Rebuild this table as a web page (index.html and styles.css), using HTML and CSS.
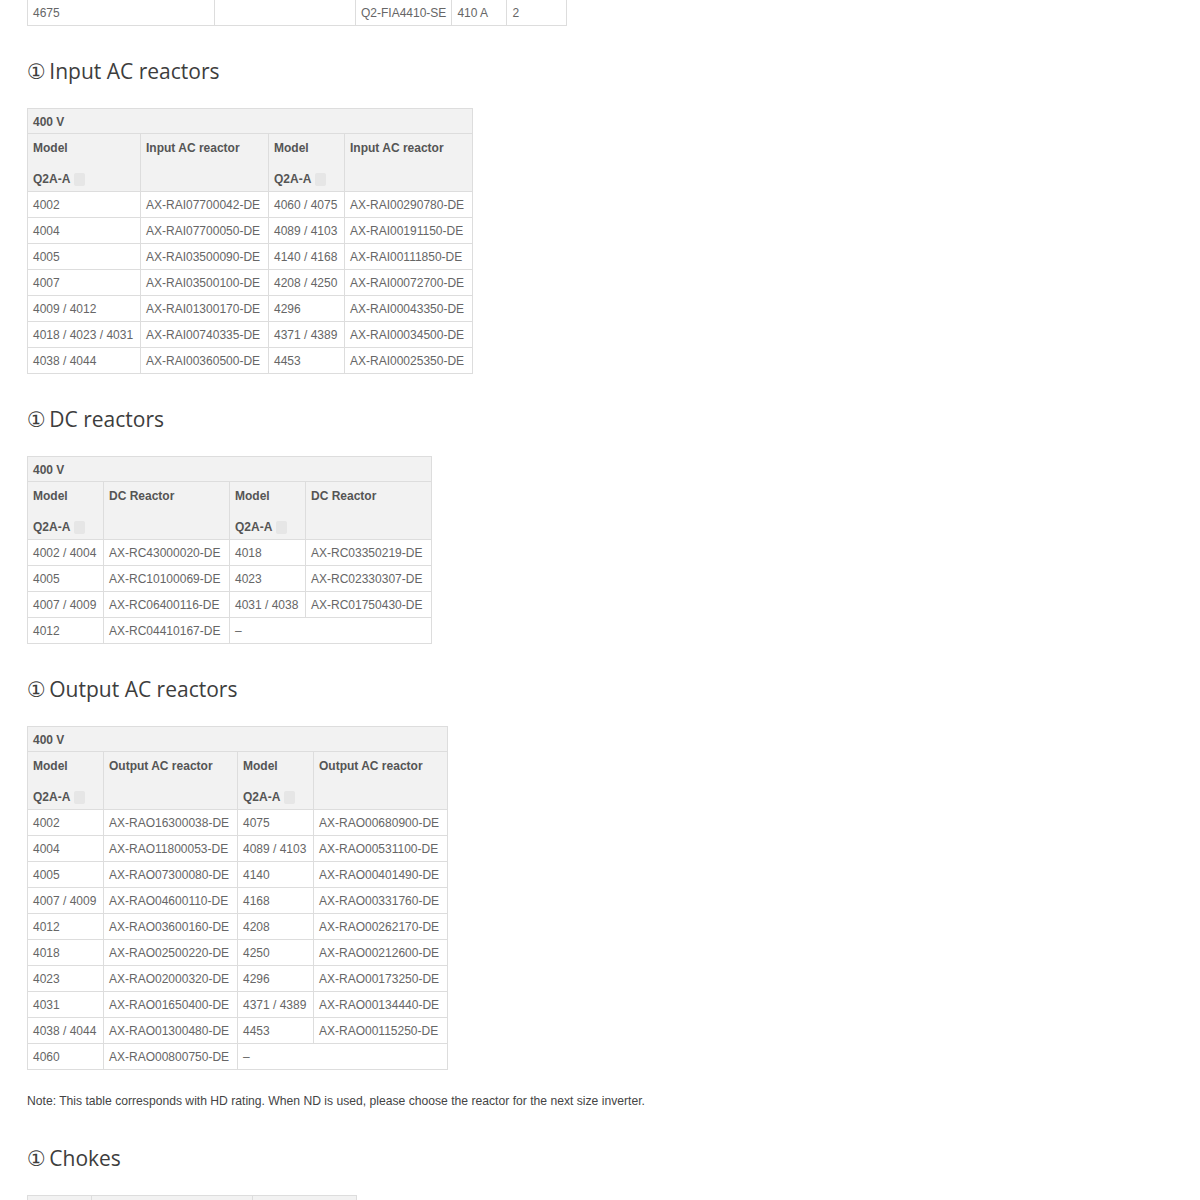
FILE: index.html
```html
<!DOCTYPE html>
<html lang="en">
<head>
<meta charset="utf-8">
<title>Reactors</title>
<link rel="stylesheet" href="styles.css">
</head>
<body>
<div class="page">

  <table class="tbl t-top">
    <colgroup><col class="c187"><col class="c141"><col class="c96"><col class="c55"><col class="c60"></colgroup>
    <tbody>
      <tr class="first"><td>4675</td><td></td><td>Q2-FIA4410-SE</td><td>410 A</td><td>2</td></tr>
    </tbody>
  </table>

  <h2 class="sec"><span class="num">①</span> Input AC reactors</h2>
  <table class="tbl">
    <colgroup><col class="c113"><col class="c128"><col class="c76"><col class="c128"></colgroup>
    <thead>
      <tr><th class="volt" colspan="4">400 V</th></tr>
      <tr>
        <th><div class="hl">Model</div><div class="hl2">Q2A-A <span class="box"></span></div></th>
        <th><div class="hl">Input AC reactor</div></th>
        <th><div class="hl">Model</div><div class="hl2">Q2A-A <span class="box"></span></div></th>
        <th><div class="hl">Input AC reactor</div></th>
      </tr>
    </thead>
    <tbody>
      <tr><td>4002</td><td>AX-RAI07700042-DE</td><td>4060 / 4075</td><td>AX-RAI00290780-DE</td></tr>
      <tr><td>4004</td><td>AX-RAI07700050-DE</td><td>4089 / 4103</td><td>AX-RAI00191150-DE</td></tr>
      <tr><td>4005</td><td>AX-RAI03500090-DE</td><td>4140 / 4168</td><td>AX-RAI00111850-DE</td></tr>
      <tr><td>4007</td><td>AX-RAI03500100-DE</td><td>4208 / 4250</td><td>AX-RAI00072700-DE</td></tr>
      <tr><td>4009 / 4012</td><td>AX-RAI01300170-DE</td><td>4296</td><td>AX-RAI00043350-DE</td></tr>
      <tr><td>4018 / 4023 / 4031</td><td>AX-RAI00740335-DE</td><td>4371 / 4389</td><td>AX-RAI00034500-DE</td></tr>
      <tr><td>4038 / 4044</td><td>AX-RAI00360500-DE</td><td>4453</td><td>AX-RAI00025350-DE</td></tr>
    </tbody>
  </table>

  <h2 class="sec"><span class="num">①</span> DC reactors</h2>
  <table class="tbl">
    <colgroup><col class="c76"><col class="c126"><col class="c76"><col class="c126"></colgroup>
    <thead>
      <tr><th class="volt" colspan="4">400 V</th></tr>
      <tr>
        <th><div class="hl">Model</div><div class="hl2">Q2A-A <span class="box"></span></div></th>
        <th><div class="hl">DC Reactor</div></th>
        <th><div class="hl">Model</div><div class="hl2">Q2A-A <span class="box"></span></div></th>
        <th><div class="hl">DC Reactor</div></th>
      </tr>
    </thead>
    <tbody>
      <tr><td>4002 / 4004</td><td>AX-RC43000020-DE</td><td>4018</td><td>AX-RC03350219-DE</td></tr>
      <tr><td>4005</td><td>AX-RC10100069-DE</td><td>4023</td><td>AX-RC02330307-DE</td></tr>
      <tr><td>4007 / 4009</td><td>AX-RC06400116-DE</td><td>4031 / 4038</td><td>AX-RC01750430-DE</td></tr>
      <tr><td>4012</td><td>AX-RC04410167-DE</td><td colspan="2">–</td></tr>
    </tbody>
  </table>

  <h2 class="sec"><span class="num">①</span> Output AC reactors</h2>
  <table class="tbl">
    <colgroup><col class="c76"><col class="c134"><col class="c76"><col class="c134"></colgroup>
    <thead>
      <tr><th class="volt" colspan="4">400 V</th></tr>
      <tr>
        <th><div class="hl">Model</div><div class="hl2">Q2A-A <span class="box"></span></div></th>
        <th><div class="hl">Output AC reactor</div></th>
        <th><div class="hl">Model</div><div class="hl2">Q2A-A <span class="box"></span></div></th>
        <th><div class="hl">Output AC reactor</div></th>
      </tr>
    </thead>
    <tbody>
      <tr><td>4002</td><td>AX-RAO16300038-DE</td><td>4075</td><td>AX-RAO00680900-DE</td></tr>
      <tr><td>4004</td><td>AX-RAO11800053-DE</td><td>4089 / 4103</td><td>AX-RAO00531100-DE</td></tr>
      <tr><td>4005</td><td>AX-RAO07300080-DE</td><td>4140</td><td>AX-RAO00401490-DE</td></tr>
      <tr><td>4007 / 4009</td><td>AX-RAO04600110-DE</td><td>4168</td><td>AX-RAO00331760-DE</td></tr>
      <tr><td>4012</td><td>AX-RAO03600160-DE</td><td>4208</td><td>AX-RAO00262170-DE</td></tr>
      <tr><td>4018</td><td>AX-RAO02500220-DE</td><td>4250</td><td>AX-RAO00212600-DE</td></tr>
      <tr><td>4023</td><td>AX-RAO02000320-DE</td><td>4296</td><td>AX-RAO00173250-DE</td></tr>
      <tr><td>4031</td><td>AX-RAO01650400-DE</td><td>4371 / 4389</td><td>AX-RAO00134440-DE</td></tr>
      <tr><td>4038 / 4044</td><td>AX-RAO01300480-DE</td><td>4453</td><td>AX-RAO00115250-DE</td></tr>
      <tr><td>4060</td><td>AX-RAO00800750-DE</td><td colspan="2">–</td></tr>
    </tbody>
  </table>

  <p class="note">Note: This table corresponds with HD rating. When ND is used, please choose the reactor for the next size inverter.</p>

  <h2 class="sec"><span class="num">①</span> Chokes</h2>
  <table class="tbl t-last">
    <colgroup><col class="c64"><col class="c161"><col class="c104"></colgroup>
    <thead>
      <tr><th></th><th></th><th></th></tr>
    </thead>
  </table>

</div>
</body>
</html>
```

FILE: styles.css
```css
html, body {
  margin: 0;
  padding: 0;
  background: #fff;
}

.page {
  padding: 0 0 0 27px;
  font-family: "Liberation Sans", Arial, sans-serif;
  font-size: 12px;
  color: #666;
}

.sec {
  font-family: "Open Sans", "DejaVu Sans", sans-serif;
  font-weight: 500;
  font-size: 21px;
  line-height: 28px;
  color: #3d3d3d;
  margin: 31px 0 23px 0;
}

.sec .num {
  margin-right: -2px;
}

.tbl {
  border-collapse: collapse;
  table-layout: fixed;
  width: auto;
}

.tbl td,
.tbl th {
  border: 1px solid #ddd;
  padding: 6px 5px 4px 5px;
  line-height: 15px;
  text-align: left;
  vertical-align: top;
  white-space: nowrap;
  overflow: hidden;
}

.tbl td {
  color: #666;
  font-weight: 400;
}

.tbl th {
  background: #f2f2f2;
  color: #555;
  font-weight: 700;
}

.tbl th.volt {
  padding-top: 6px;
  padding-bottom: 3px;
}

.t-top tr.first td {
  border-top: none;
  padding-top: 6px;
  padding-bottom: 4px;
}

.t-last th {
  height: 15px;
}

.hl {
  height: 15px;
  padding-top: 1px;
}

.hl2 {
  height: 15px;
  margin-top: 16px;
  display: flex;
  align-items: center;
  gap: 1px;
}

.box {
  display: inline-block;
  width: 11px;
  height: 13px;
  background: #e6e6e6;
  border-radius: 2px;
  margin-left: 3px;
}

.note {
  margin: 23px 0 35px 0;
  color: #444;
  font-size: 12.15px;
  line-height: 16px;
}

.c187 { width: 187px; }
.c141 { width: 141px; }
.c96 { width: 96px; }
.c55 { width: 55px; }
.c60 { width: 60px; }
.c113 { width: 113px; }
.c128 { width: 128px; }
.c76 { width: 76px; }
.c126 { width: 126px; }
.c134 { width: 134px; }
.c64 { width: 64px; }
.c161 { width: 161px; }
.c104 { width: 104px; }
```
